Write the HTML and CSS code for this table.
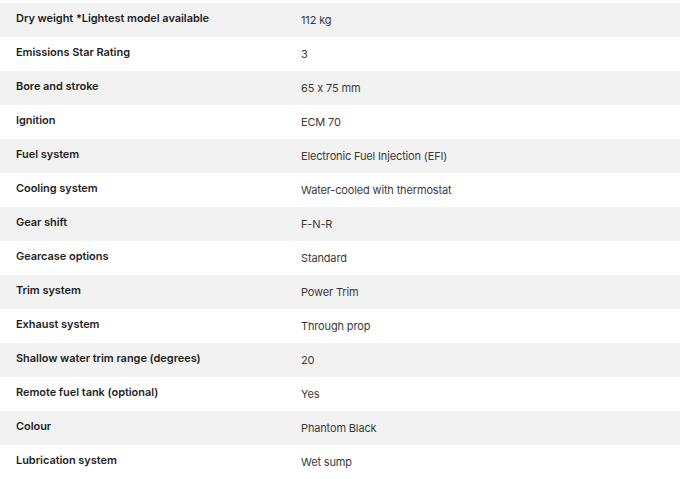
FILE: index.html
```html
<!DOCTYPE html>
<html>
<head>
<meta charset="utf-8">
<link rel="stylesheet" href="styles.css">
</head>
<body>
<div class="specs">
  <div class="row"><div class="label">Dry weight *Lightest model available</div><div class="value">112 kg</div></div>
  <div class="row"><div class="label">Emissions Star Rating</div><div class="value">3</div></div>
  <div class="row"><div class="label">Bore and stroke</div><div class="value">65 x 75 mm</div></div>
  <div class="row"><div class="label">Ignition</div><div class="value">ECM 70</div></div>
  <div class="row"><div class="label">Fuel system</div><div class="value">Electronic Fuel Injection (EFI)</div></div>
  <div class="row"><div class="label">Cooling system</div><div class="value">Water-cooled with thermostat</div></div>
  <div class="row"><div class="label">Gear shift</div><div class="value">F-N-R</div></div>
  <div class="row"><div class="label">Gearcase options</div><div class="value">Standard</div></div>
  <div class="row"><div class="label">Trim system</div><div class="value">Power Trim</div></div>
  <div class="row"><div class="label">Exhaust system</div><div class="value">Through prop</div></div>
  <div class="row"><div class="label">Shallow water trim range (degrees)</div><div class="value">20</div></div>
  <div class="row"><div class="label">Remote fuel tank (optional)</div><div class="value">Yes</div></div>
  <div class="row"><div class="label">Colour</div><div class="value">Phantom Black</div></div>
  <div class="row"><div class="label">Lubrication system</div><div class="value">Wet sump</div></div>
</div>
</body>
</html>
```
FILE: styles.css
```css
html, body {
  margin: 0;
  padding: 0;
  background: #ffffff;
}
body {
  font-family: Inter, "Liberation Sans", sans-serif;
  font-feature-settings: "calt" 0;
  padding-top: 3px;
}
.specs {
  width: 680px;
  display: flex;
  flex-direction: column;
}
.row {
  display: grid;
  grid-template-columns: 285px 1fr;
  height: 34px;
}
.row:nth-child(odd) {
  background: #f2f2f2;
}
.label {
  padding: 8px 0 0 16px;
  font-size: 11px;
  font-weight: 600;
  color: #1f1f1f;
  line-height: 14px;
  letter-spacing: -0.05px;
}
.value {
  padding: 10px 0 0 16px;
  font-size: 11px;
  font-weight: 400;
  color: #3a3a3a;
  line-height: 14px;
  letter-spacing: -0.15px;
}
```
